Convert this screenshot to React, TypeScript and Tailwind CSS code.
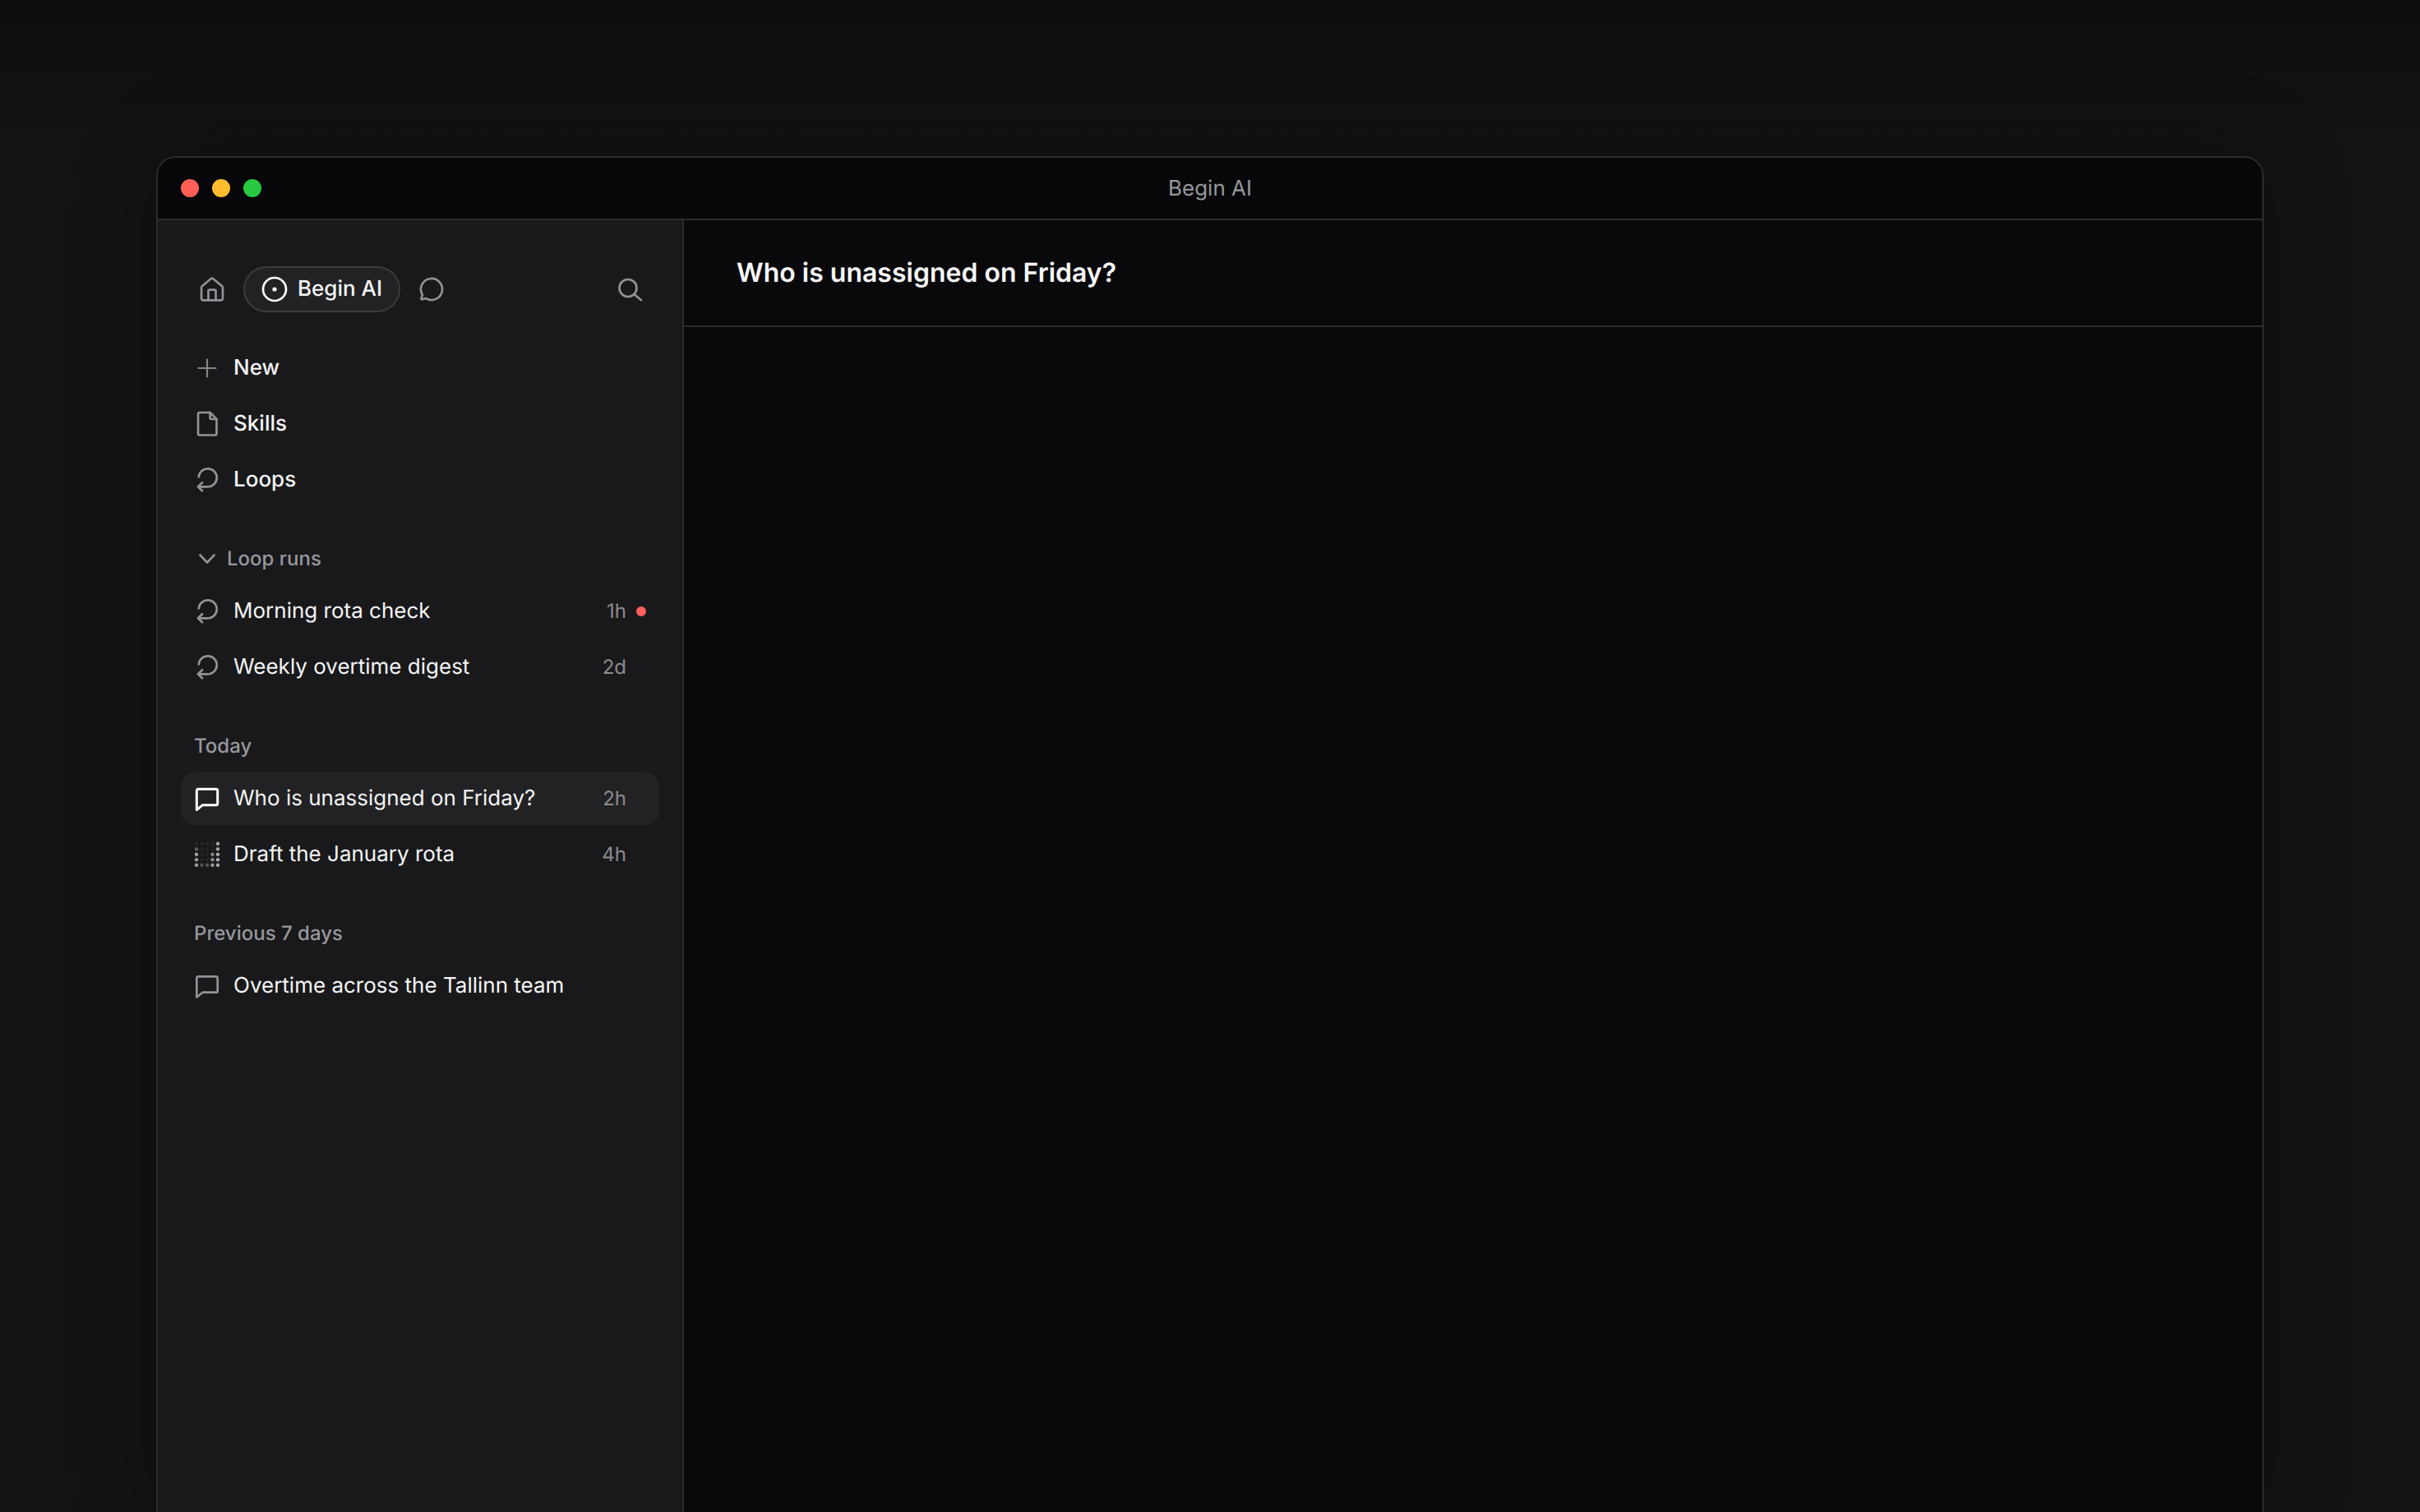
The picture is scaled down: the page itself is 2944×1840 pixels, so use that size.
import type { ReactNode } from 'react';

const font = { fontFamily: 'Inter, "Liberation Sans", sans-serif' };

function Icon({ children, className = 'text-[#919297]' }: { children: ReactNode; className?: string }) {
  return (
    <svg
      viewBox="0 0 32 32"
      fill="none"
      stroke="currentColor"
      strokeWidth="2.7"
      strokeLinecap="round"
      strokeLinejoin="round"
      className={`w-8 h-8 shrink-0 ${className}`}
    >
      {children}
    </svg>
  );
}

const HomeIcon = () => (
  <Icon>
    <path d="M14.6 3.2a2.2 2.2 0 0 1 2.8 0l10.8 9a2.4 2.4 0 0 1 .8 1.8V27a2.4 2.4 0 0 1-2.4 2.4H5.4A2.4 2.4 0 0 1 3 27V14a2.4 2.4 0 0 1 .8-1.8z" />
    <path d="M11.5 29.4V18a1.4 1.4 0 0 1 1.4-1.4h6.2a1.4 1.4 0 0 1 1.4 1.4v11.4" />
  </Icon>
);

const TargetIcon = () => (
  <Icon className="text-white">
    <circle cx="16" cy="16" r="14" />
    <circle cx="16" cy="16" r="2.6" fill="currentColor" stroke="none" />
  </Icon>
);

const RoundChatIcon = () => (
  <Icon>
    <path d="M9.2 27.1A13 13 0 1 0 4.9 22.8L3.6 26.9Q3.2 28.6 5 28.2Q7.5 27.3 9.2 27.1Z" />
  </Icon>
);

const SearchIcon = () => (
  <Icon>
    <circle cx="13" cy="14.5" r="10.5" />
    <path d="M21 22.5L29 29.2" />
  </Icon>
);

const PlusIcon = () => (
  <Icon className="text-[#85868b]">
    <path d="M16 5.5V26.5M5.5 16H26.5" strokeWidth="2.2" />
  </Icon>
);

const FileIcon = () => (
  <Icon>
    <path d="M7 2H19.5L27.5 10V27.5A2 2 0 0 1 25.5 29.5H7A2 2 0 0 1 5 27.5V4A2 2 0 0 1 7 2Z" />
    <path d="M19.5 2V8A2 2 0 0 0 21.5 10H27.5" />
  </Icon>
);

const LoopIcon = () => (
  <Icon>
    <path d="M10 19.3L5 24.3L10 29.3M5 24.3H16.7A11 11 0 1 0 5.8 12.5" />
  </Icon>
);

const ChevronIcon = () => (
  <Icon>
    <path d="M7.5 11.5L16 20.5L24.5 11.5" />
  </Icon>
);

const BubbleIcon = ({ active }: { active?: boolean }) => (
  <Icon className={active ? 'text-white' : 'text-[#919297]'}>
    <path
      d="M5.3 4.3H26.7A2 2 0 0 1 28.7 6.3V21.7A2 2 0 0 1 26.7 23.7H10.5L3.3 29.5V6.3A2 2 0 0 1 5.3 4.3Z"
      strokeWidth={active ? 3 : 2.7}
    />
  </Icon>
);

// thinking indicator: a 5x5 dot matrix, each value is the dot's opacity
const matrix = [
  [0.08, 0.08, 0.08, 0.08, 0.8],
  [0.4, 0.06, 0.06, 0.06, 0.8],
  [0.8, 0.06, 0.06, 0.65, 0.85],
  [0.75, 0.06, 0.06, 0.65, 0.85],
  [0.75, 0.35, 0.35, 0.75, 0.85],
];

const MatrixIcon = () => (
  <svg viewBox="0 0 32 32" className="w-8 h-8 shrink-0 text-[#c4c5c8] blur-[0.6px]">
    {matrix.map((row, y) =>
      row.map((o, x) => (
        <circle key={`${x}-${y}`} cx={3 + x * 6.5} cy={2.8 + y * 6.5} r="2.2" fill="currentColor" opacity={o} />
      )),
    )}
  </svg>
);

function Row({
  icon,
  label,
  time,
  dot,
  active,
  medium,
}: {
  icon: ReactNode;
  label: string;
  time?: string;
  dot?: boolean;
  active?: boolean;
  medium?: boolean;
}) {
  return (
    <div className={`flex items-center h-16 pl-4 pr-4 rounded-2xl ${active ? 'bg-[#222224]' : ''}`}>
      {icon}
      <span className={`ml-4 pb-[2px] text-[26px] text-[#f4f4f5] ${medium ? 'font-medium' : ''}`}>{label}</span>
      {time && <span className="ml-auto text-[24px] text-[#8a8b90]">{time}</span>}
      {time && <span className={`ml-3 w-3 h-3 rounded-full ${dot ? 'bg-[#ff5f5f]' : ''}`} />}
    </div>
  );
}

const SectionLabel = ({ children }: { children: ReactNode }) => (
  <div className="flex items-center h-10 mt-11 mb-3 pl-4 text-[24px] font-medium text-[#97989c]">{children}</div>
);

export default function App() {
  return (
    <div
      className="h-[1840px] overflow-hidden bg-gradient-to-b from-[#0e0e10] to-[#131315] to-[10%] pt-[190px] px-[190px] [text-rendering:geometricPrecision]"
      style={font}
    >
      <div className="h-full flex flex-col overflow-hidden rounded-t-3xl border-2 border-b-0 border-[#2b2b2d] bg-[#09090b] shadow-[0_0_100px_rgba(0,0,0,0.3)]">
        {/* Title bar */}
        <div className="relative flex items-center shrink-0 h-[76px] pl-7 gap-4 border-b-2 border-[#2b2b2d] bg-[#070709]">
          <span className="w-[22px] h-[22px] rounded-full bg-[#ff5f57]" />
          <span className="w-[22px] h-[22px] rounded-full bg-[#febc2e]" />
          <span className="w-[22px] h-[22px] rounded-full bg-[#28c840]" />
          <span className="absolute inset-x-0 text-center text-[26px] text-[#97989c]">Begin AI</span>
        </div>

        <div className="flex flex-1 min-h-0">
          {/* Sidebar */}
          <aside className="w-[640px] shrink-0 border-r-2 border-[#2b2b2d] bg-[#19191b] px-7 pt-14">
            <div className="flex items-center gap-[22px] pl-[22px] pr-[19px] mb-9">
              <HomeIcon />
              <div className="flex items-center gap-3 h-14 pl-5 pr-5 rounded-full border-2 border-[#3c3c3e] bg-[#222224]">
                <TargetIcon />
                <span className="pb-[1px] text-[26px] font-medium text-[#f4f4f5]">Begin AI</span>
              </div>
              <RoundChatIcon />
              <div className="ml-auto">
                <SearchIcon />
              </div>
            </div>

            <div className="flex flex-col gap-1">
              <Row icon={<PlusIcon />} label="New" medium />
              <Row icon={<FileIcon />} label="Skills" medium />
              <Row icon={<LoopIcon />} label="Loops" medium />
            </div>

            <SectionLabel>
              <ChevronIcon />
              <span className="ml-2">Loop runs</span>
            </SectionLabel>
            <div className="flex flex-col gap-1">
              <Row icon={<LoopIcon />} label="Morning rota check" time="1h" dot />
              <Row icon={<LoopIcon />} label="Weekly overtime digest" time="2d" />
            </div>

            <SectionLabel>Today</SectionLabel>
            <div className="flex flex-col gap-1">
              <Row icon={<BubbleIcon active />} label="Who is unassigned on Friday?" time="2h" active />
              <Row icon={<MatrixIcon />} label="Draft the January rota" time="4h" />
            </div>

            <SectionLabel>Previous 7 days</SectionLabel>
            <div className="flex flex-col gap-1">
              <Row icon={<BubbleIcon />} label="Overtime across the Tallinn team" />
            </div>
          </aside>

          {/* Conversation */}
          <main className="flex-1 min-w-0">
            <div className="flex items-center h-[130px] px-16 border-b-2 border-[#2b2b2d]">
              <h1 className="text-[32px] font-semibold text-[#f7f7f8]">Who is unassigned on Friday?</h1>
            </div>
          </main>
        </div>
      </div>
    </div>
  );
}
